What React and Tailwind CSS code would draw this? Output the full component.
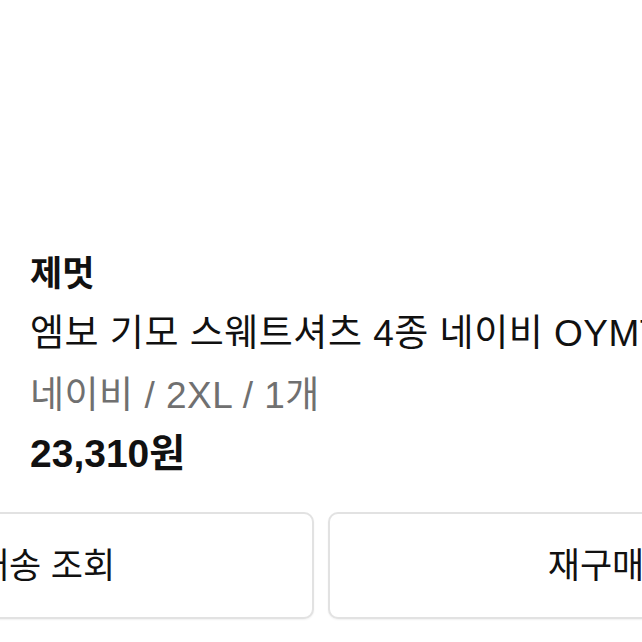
import React from 'react';

const order = {
  brand: '제멋',
  name: '엠보 기모 스웨트셔츠 4종 네이비 OYMT',
  option: '네이비 / 2XL / 1개',
  price: '23,310원',
};

function ActionButton({ label }) {
  return (
    <div className="flex h-[107px] w-[536px] shrink-0 items-center justify-center rounded-[10px] border-2 border-[#e2e2e2] bg-white pt-[2px] text-[35px] text-[#111] shadow-[0_1px_2px_rgba(0,0,0,0.06)]">
      {label}
    </div>
  );
}

export default function App() {
  return (
    <div className="h-[642px] w-[642px] overflow-hidden bg-white font-['Liberation_Sans','Noto_Sans_CJK_KR',sans-serif] text-[#111]">
      <div className="whitespace-nowrap pl-[30px] pt-[248px]">
        <div className="text-[35px] font-bold leading-[52px]">{order.brand}</div>
        <div className="mt-[8px] text-[37px] leading-[52px] tracking-[0.5px]">{order.name}</div>
        <div className="mt-[10px] text-[37px] leading-[52px] tracking-[0.5px] text-[#707070]">{order.option}</div>
        <div className="mt-[6px] text-[39px] font-bold leading-[52px]">{order.price}</div>
      </div>
      <div className="-ml-[222px] mt-[32px] flex gap-[14px]">
        <ActionButton label="배송 조회" />
        <ActionButton label="재구매" />
      </div>
    </div>
  );
}
